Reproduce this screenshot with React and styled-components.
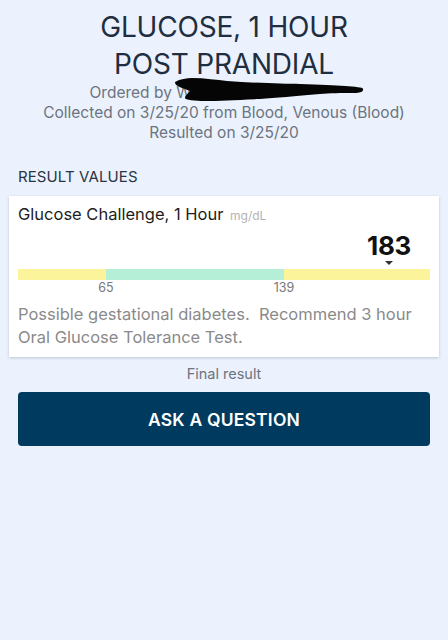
import React from "react";
import styled, { createGlobalStyle } from "styled-components";

const Global = createGlobalStyle`
  html, body { margin: 0; padding: 0; background: #ebf2fd; }
  body { font-family: Inter, "Noto Sans", sans-serif; -webkit-font-smoothing: antialiased; }
`;

const Page = styled.div`
  width: 448px;
  height: 640px;
  background: #ebf2fd;
  display: flex;
  flex-direction: column;
  box-sizing: border-box;
  padding-top: 9px;
`;

const Header = styled.header`
  display: flex;
  flex-direction: column;
  align-items: center;
  text-align: center;
`;

const Title = styled.h1`
  margin: 0;
  font-weight: 400;
  font-size: 28px;
  line-height: 37px;
  color: #1f2e40;
  letter-spacing: -0.2px;
`;

const Meta = styled.div`
  font-size: 15.5px;
  line-height: 20px;
  color: #6c7480;
`;

const Redacted = styled.span`
  display: inline-block;
  position: relative;
  width: 167px;
  height: 14px;
  vertical-align: baseline;
`;

const Scribble = styled.svg`
  position: absolute;
  left: -16px;
  top: -6px;
  width: 190px;
  height: 24px;
  overflow: visible;
  pointer-events: none;
`;

const SectionLabel = styled.div`
  margin: 24px 18px 0;
  font-size: 15px;
  line-height: 20px;
  color: #2a3442;
  letter-spacing: 0.1px;
`;

const Card = styled.section`
  margin: 9px 9px 0;
  background: #ffffff;
  box-shadow: 0 1px 3px rgba(0, 0, 0, 0.18);
  padding: 7px 9px 8px;
`;

const TestName = styled.div`
  font-size: 16.5px;
  line-height: 22px;
  color: #1e1e1e;
`;

const Unit = styled.span`
  font-size: 12px;
  color: #b3b3b3;
  margin-left: 2px;
`;

const RangeWrap = styled.div`
  position: relative;
  margin-top: 42px;
`;

const ValueMarker = styled.div`
  position: absolute;
  bottom: 31px;
  transform: translateX(-50%);
  display: flex;
  flex-direction: column;
  align-items: center;
`;

const Value = styled.div`
  font-size: 26px;
  line-height: 26px;
  font-weight: 700;
  color: #111;
  letter-spacing: -0.3px;
`;

const Caret = styled.div`
  width: 0;
  height: 0;
  border-left: 4px solid transparent;
  border-right: 4px solid transparent;
  border-top: 4px solid #333;
  margin-top: 2px;
`;

const Bar = styled.div`
  display: flex;
  height: 11px;
`;

const Segment = styled.div`
  flex: ${(p) => p.$flex};
  background: ${(p) => p.$color};
`;

const Ticks = styled.div`
  position: relative;
  height: 16px;
`;

const Tick = styled.span`
  position: absolute;
  top: 1px;
  transform: translateX(-50%);
  font-size: 12.5px;
  line-height: 14px;
  color: #777;
`;

const Comment = styled.p`
  margin: 7px 0 0;
  font-size: 16.5px;
  line-height: 23px;
  color: #8a8a8a;
  white-space: pre-wrap;
`;

const Status = styled.div`
  margin-top: 7px;
  text-align: center;
  font-size: 14.5px;
  line-height: 20px;
  color: #6c7480;
`;

const Button = styled.button`
  margin: 8px 18px 0;
  height: 54px;
  border: none;
  border-radius: 4px;
  background: #003a5e;
  color: #ffffff;
  font-family: Inter, "Noto Sans", sans-serif;
  font-size: 17.5px;
  font-weight: 600;
  letter-spacing: 0.2px;
  cursor: pointer;
`;

export default function App() {
  const total = 412;
  const lowX = 88;
  const highX = 266;
  const valueX = 371;
  return (
    <Page>
      <Global />
      <Header>
        <Title>
          GLUCOSE, 1 HOUR
          <br />
          POST PRANDIAL
        </Title>
        <Meta>
          Ordered by W
          <Redacted>
            <Scribble viewBox="0 0 190 24">
              <path
                d="M0 4 C5 1 12 0 17 0 C30 0 42 2 52 3 C80 5 110 6 125 6 C145 7 160 7 170 8 C180 9 188 9 188 11 C189 14 184 15 180 15 C165 15 155 15 145 16 C120 18 100 20 85 21 C60 22 45 23 30 23 C20 23 10 22 10 20 C10 17 14 15 15 13 C10 11 4 9 3 8 C1 7 0 6 0 4 Z"
                fill="#050505"
              />
            </Scribble>
          </Redacted>
        </Meta>
        <Meta>Collected on 3/25/20 from Blood, Venous (Blood)</Meta>
        <Meta>Resulted on 3/25/20</Meta>
      </Header>

      <SectionLabel>RESULT VALUES</SectionLabel>
      <Card>
        <TestName>
          Glucose Challenge, 1 Hour <Unit>mg/dL</Unit>
        </TestName>
        <RangeWrap>
          <ValueMarker style={{ left: valueX }}>
            <Value>183</Value>
            <Caret />
          </ValueMarker>
          <Bar>
            <Segment $flex={lowX} $color="#fbf49b" />
            <Segment $flex={highX - lowX} $color="#b6efd8" />
            <Segment $flex={total - highX} $color="#fbf49b" />
          </Bar>
          <Ticks>
            <Tick style={{ left: lowX }}>65</Tick>
            <Tick style={{ left: highX }}>139</Tick>
          </Ticks>
        </RangeWrap>
        <Comment>
          {"Possible gestational diabetes.  Recommend 3 hour\nOral Glucose Tolerance Test."}
        </Comment>
      </Card>
      <Status>Final result</Status>
      <Button>ASK A QUESTION</Button>
    </Page>
  );
}
